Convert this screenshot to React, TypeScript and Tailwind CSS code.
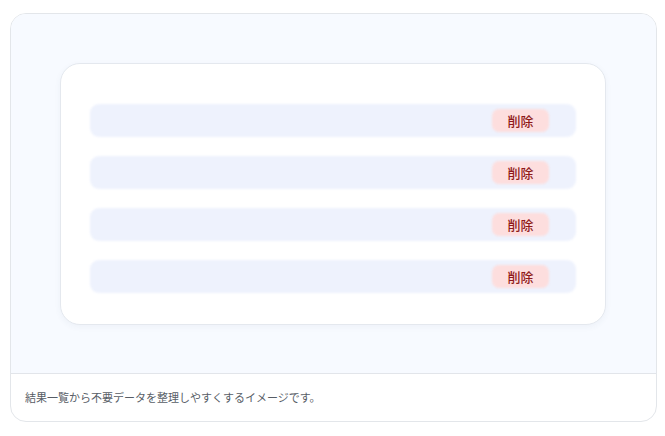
import React from 'react';

const ROWS = [1, 2, 3, 4];

export default function App() {
  return (
    <div className="w-[665px] h-[436px] bg-white pt-[13px] pl-[10px]" style={{ fontFamily: '"Noto Sans CJK JP", "Noto Sans", sans-serif' }}>
      <div className="w-[647px] h-[409px] rounded-[16px] border border-[#e3e6ea] overflow-hidden flex flex-col bg-white">
        <div className="h-[360px] bg-[#f7faff] border-b border-[#e2e5ea] pt-[49px] pl-[49px]">
          <div className="w-[546px] h-[262px] bg-white rounded-[20px] border border-[#e4e8ee] shadow-[0_2px_6px_rgba(60,80,120,0.05)] pt-[40px] px-[29px] flex flex-col gap-[19px]">
            {ROWS.map((r) => (
              <div key={r} className="relative h-[33px] flex items-center justify-end pr-[27px]">
                <div className="absolute inset-0 rounded-[9px] bg-[#eef2fd] blur-[0.8px]" />
                <span className="relative h-[23px] w-[57px] flex items-center justify-center">
                  <span className="absolute inset-0 rounded-[7px] bg-[#fddede] blur-[1.2px]" />
                  <span className="relative text-[#8f1a1a] text-[13px] font-medium leading-none">削除</span>
                </span>
              </div>
            ))}
          </div>
        </div>
        <div className="flex-1 flex items-center pl-[14px] text-[11px] text-[#575d66]">
          結果一覧から不要データを整理しやすくするイメージです。
        </div>
      </div>
    </div>
  );
}
